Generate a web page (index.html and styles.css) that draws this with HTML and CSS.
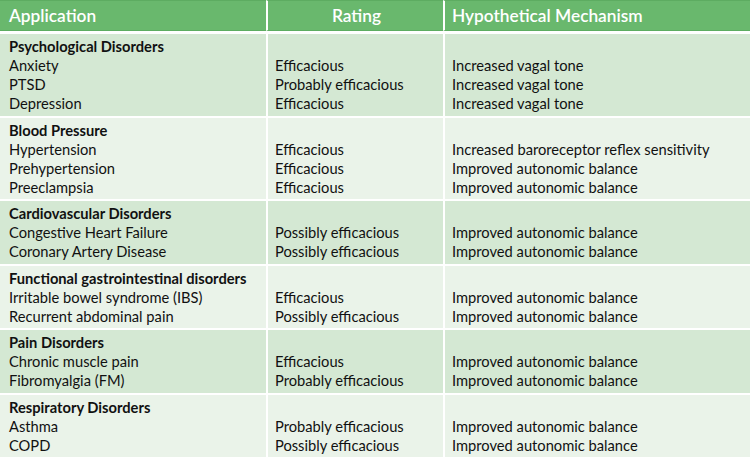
FILE: index.html
```html
<!DOCTYPE html>
<html>
<head>
<meta charset="utf-8">
<link rel="stylesheet" href="styles.css">
</head>
<body>
<table class="tbl">
  <colgroup><col class="c1"><col class="c2"><col class="c3"></colgroup>
  <thead>
    <tr>
      <th class="h-app">Application</th>
      <th class="h-rating">Rating</th>
      <th class="h-mech">Hypothetical Mechanism</th>
    </tr>
  </thead>
  <tbody>
    <tr class="dark">
      <td><div class="cat">Psychological Disorders</div><div>Anxiety</div><div>PTSD</div><div>Depression</div></td>
      <td><div class="blank"></div><div>Efficacious</div><div>Probably efficacious</div><div>Efficacious</div></td>
      <td><div class="blank"></div><div>Increased vagal tone</div><div>Increased vagal tone</div><div>Increased vagal tone</div></td>
    </tr>
    <tr class="light">
      <td><div class="cat">Blood Pressure</div><div>Hypertension</div><div>Prehypertension</div><div>Preeclampsia</div></td>
      <td><div class="blank"></div><div>Efficacious</div><div>Efficacious</div><div>Efficacious</div></td>
      <td><div class="blank"></div><div>Increased baroreceptor reflex sensitivity</div><div>Improved autonomic balance</div><div>Improved autonomic balance</div></td>
    </tr>
    <tr class="dark">
      <td><div class="cat">Cardiovascular Disorders</div><div>Congestive Heart Failure</div><div>Coronary Artery Disease</div></td>
      <td><div class="blank"></div><div>Possibly efficacious</div><div>Possibly efficacious</div></td>
      <td><div class="blank"></div><div>Improved autonomic balance</div><div>Improved autonomic balance</div></td>
    </tr>
    <tr class="light">
      <td><div class="cat">Functional gastrointestinal disorders</div><div>Irritable bowel syndrome (IBS)</div><div>Recurrent abdominal pain</div></td>
      <td><div class="blank"></div><div>Efficacious</div><div>Possibly efficacious</div></td>
      <td><div class="blank"></div><div>Improved autonomic balance</div><div>Improved autonomic balance</div></td>
    </tr>
    <tr class="dark">
      <td><div class="cat">Pain Disorders</div><div>Chronic muscle pain</div><div>Fibromyalgia (FM)</div></td>
      <td><div class="blank"></div><div>Efficacious</div><div>Probably efficacious</div></td>
      <td><div class="blank"></div><div>Improved autonomic balance</div><div>Improved autonomic balance</div></td>
    </tr>
    <tr class="light">
      <td><div class="cat">Respiratory Disorders</div><div>Asthma</div><div>COPD</div></td>
      <td><div class="blank"></div><div>Probably efficacious</div><div>Possibly efficacious</div></td>
      <td><div class="blank"></div><div>Improved autonomic balance</div><div>Improved autonomic balance</div></td>
    </tr>
  </tbody>
</table>
</body>
</html>
```
FILE: styles.css
```css
html, body {
  margin: 0;
  padding: 0;
  background: #ffffff;
}
.tbl {
  width: 750px;
  table-layout: fixed;
  border-collapse: separate;
  border-spacing: 0;
  font-family: Lato, "Liberation Sans", sans-serif;
  color: #111111;
}
.c1 { width: 266px; }
.c2 { width: 177px; }
.c3 { width: 307px; }
.tbl th {
  background: #69b86d;
  color: #ffffff;
  font-size: 17.3px;
  font-weight: 600;
  height: 29px;
  padding: 0 0 0 7px;
  text-align: left;
  border-top: 1px solid #5dac61;
  border-bottom: 1px solid #5dac61;
  line-height: 29px;
}
.tbl th.h-app { padding-left: 9px; }
.tbl th.h-rating { text-align: center; padding-left: 2px; }
.tbl th + th { border-left: 2px solid #ffffff; }
.tbl tbody tr:first-child td { border-top: 3px solid #ffffff; }
.tbl td {
  vertical-align: top;
  font-size: 14.7px;
  line-height: 19px;
  padding: 3px 0 2.5px 7px;
  border-top: 2px solid #ffffff;
  white-space: nowrap;
}
.tbl td:first-child { padding-left: 9px; }
.tbl td + td { border-left: 2px solid #ffffff; }
.dark td { background: #d4e8d3; }
.light td { background: #eaf3e9; }
.cat { font-weight: 700; }
.blank { height: 19px; }
```
